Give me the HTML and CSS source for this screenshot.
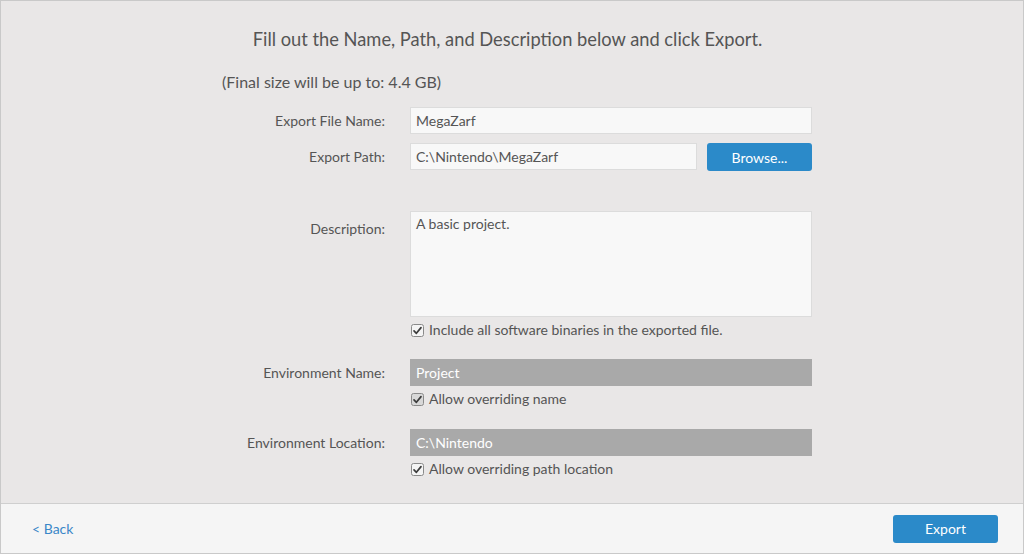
FILE: index.html
```html
<!DOCTYPE html>
<html>
<head>
<meta charset="utf-8">
<link rel="stylesheet" href="styles.css">
</head>
<body>
<div class="window">
  <main class="content">
    <h1 class="title">Fill out the Name, Path, and Description below and click Export.</h1>
    <p class="size-note">(Final size will be up to: 4.4 GB)</p>
    <div class="form">
      <label class="label">Export File Name:</label>
      <div class="field"><div class="input">MegaZarf</div></div>

      <label class="label">Export Path:</label>
      <div class="field path-row">
        <div class="input path-input">C:\Nintendo\MegaZarf</div>
        <button class="btn browse">Browse...</button>
      </div>

      <label class="label label-desc">Description:</label>
      <div class="field desc-field">
        <div class="textarea">A basic project.</div>
        <div class="check-row">
          <svg class="check" viewBox="0 0 13 13" width="13" height="13"><rect x="0.5" y="0.5" width="12" height="12" rx="2" fill="#f4f4f4" stroke="#8a8a8a"/><path d="M3 6.8 L5.4 9.3 L10 3.6" fill="none" stroke="#3c3c3c" stroke-width="1.7" stroke-linecap="round" stroke-linejoin="round"/></svg>
          <span>Include all software binaries in the exported file.</span>
        </div>
      </div>

      <label class="label label-env">Environment Name:</label>
      <div class="field env-field">
        <div class="input disabled">Project</div>
        <div class="check-row">
          <svg class="check" viewBox="0 0 13 13" width="13" height="13"><rect x="0.5" y="0.5" width="12" height="12" rx="2" fill="#d8d8d8" stroke="#8a8a8a"/><path d="M3 6.8 L5.4 9.3 L10 3.6" fill="none" stroke="#3c3c3c" stroke-width="1.7" stroke-linecap="round" stroke-linejoin="round"/></svg>
          <span>Allow overriding name</span>
        </div>
      </div>

      <label class="label label-env env-loc">Environment Location:</label>
      <div class="field env-field env-loc">
        <div class="input disabled">C:\Nintendo</div>
        <div class="check-row">
          <svg class="check" viewBox="0 0 13 13" width="13" height="13"><rect x="0.5" y="0.5" width="12" height="12" rx="2" fill="#f4f4f4" stroke="#8a8a8a"/><path d="M3 6.8 L5.4 9.3 L10 3.6" fill="none" stroke="#3c3c3c" stroke-width="1.7" stroke-linecap="round" stroke-linejoin="round"/></svg>
          <span>Allow overriding path location</span>
        </div>
      </div>
    </div>
  </main>
  <footer class="footer">
    <a class="back">&lt; Back</a>
    <button class="btn export">Export</button>
  </footer>
</div>
</body>
</html>
```

FILE: styles.css
```css
* { box-sizing: border-box; }
html, body { margin: 0; padding: 0; }
body {
  font-family: Lato, "Open Sans", sans-serif;
  color: #555;
  background: #e9e7e7;
}
.window {
  width: 1024px;
  height: 554px;
  border: 1px solid #c9c9c9;
  display: flex;
  flex-direction: column;
  background: #e9e7e7;
}
.content {
  flex: 1;
  padding-top: 26px;
}
.title {
  margin: 0;
  padding-right: 9px;
  font-size: 18.3px;
  font-weight: normal;
  text-align: center;
  line-height: 24px;
  color: #555;
}
.size-note {
  margin: 21px 0 0 0;
  padding-left: 221px;
  font-size: 16px;
  line-height: 20px;
}
.form {
  margin-top: 15px;
  display: grid;
  grid-template-columns: 384px 402px;
  column-gap: 25px;
  row-gap: 8px;
  font-size: 14px;
}
.label {
  text-align: right;
  line-height: 28px;
  color: #555;
}
.field { min-width: 0; }
.input {
  height: 27px;
  line-height: 26px;
  padding: 0 5px;
  background: #f8f8f8;
  border: 1px solid #dcdcdc;
  color: #555;
}
.path-row {
  display: flex;
  gap: 10px;
}
.path-input { flex: 1; }
.btn {
  font-family: Lato, "Open Sans", sans-serif;
  font-size: 14px;
  color: #fff;
  background: #2b8ac9;
  border: none;
  border-radius: 3px;
  height: 28px;
  padding: 0;
}
.browse { width: 105px; }
.label-desc { margin-top: 32px; padding-top: 4px; }
.desc-field { margin-top: 32px; }
.textarea {
  height: 106px;
  padding: 2px 5px;
  line-height: 20px;
  background: #f8f8f8;
  border: 1px solid #dcdcdc;
}
.check-row {
  display: flex;
  align-items: center;
  gap: 5px;
  margin-top: 4px;
  padding-left: 1px;
  height: 18px;
  line-height: 18px;
}
.check { flex: none; }
.label-env { margin-top: 12px; }
.env-field { margin-top: 12px; }
.env-loc { margin-top: 13px; }
.disabled {
  background: #a9a9a9;
  border-color: #a9a9a9;
  color: #fff;
}
.footer {
  height: 50px;
  flex: none;
  background: #f5f5f5;
  border-top: 1px solid #cfcfcf;
  display: flex;
  align-items: center;
  justify-content: space-between;
  padding: 0 25px 0 31px;
}
.back {
  color: #3a87c8;
  font-size: 14px;
  cursor: pointer;
}
.export { width: 105px; height: 28px; }
```
